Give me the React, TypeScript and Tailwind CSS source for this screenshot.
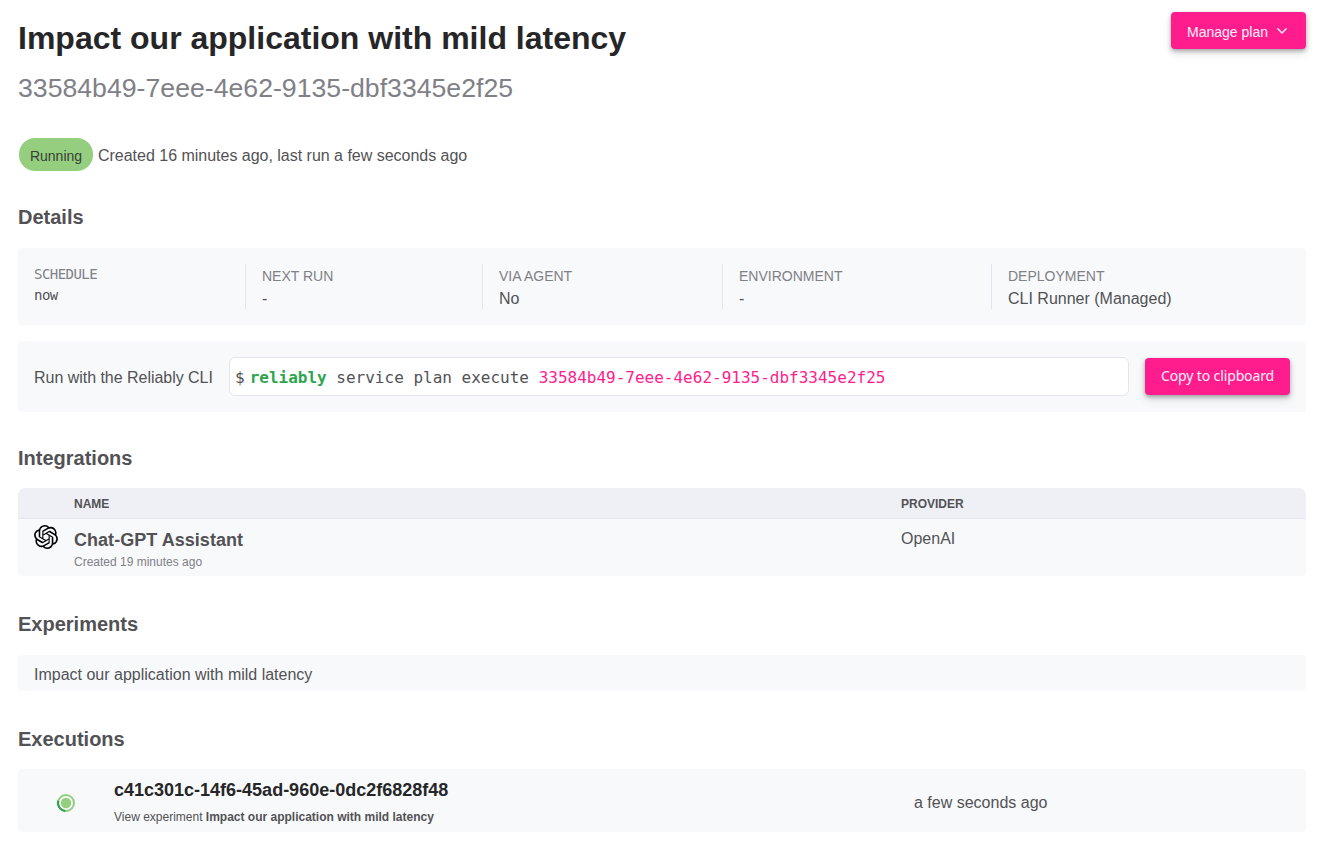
import React from "react";
import { SiOpenai } from "react-icons/si";

const cells = [
  { label: "NEXT RUN", value: "-", width: "w-[237px]" },
  { label: "VIA AGENT", value: "No", width: "w-[240px]" },
  { label: "ENVIRONMENT", value: "-", width: "w-[269px]" },
  { label: "DEPLOYMENT", value: "CLI Runner (Managed)", width: "flex-1" },
];

function Heading({ children }: { children: React.ReactNode }) {
  return <h2 className="text-[20px] leading-[30px] font-bold">{children}</h2>;
}

export default function App() {
  return (
    <main className="h-[844px] w-full overflow-hidden bg-white pl-[18px] pr-[11px] pt-3 font-['Liberation_Sans',Arial,sans-serif] text-base text-[#525255]">
      <header className="flex h-[92px] items-start justify-between">
        <div>
          <h1 className="text-[32px] leading-[52px] font-bold whitespace-nowrap text-[#262628]">Impact our application with mild latency</h1>
          <p className="text-[26.67px] leading-[48px] whitespace-nowrap text-[#808087]">33584b49-7eee-4e62-9135-dbf3345e2f25</p>
        </div>
        <button className="flex h-[37px] w-[135px] items-center rounded bg-[#ff1d8e] pl-4 pt-1 text-[14px] text-[#fff0f8] shadow-[0_2px_4px_rgba(0,0,0,0.3),0_5px_10px_rgba(0,0,0,0.1)]">
          <span className="w-[89px] text-left whitespace-nowrap">Manage plan</span>
          <svg className="-mt-[3px]" width="12" height="12" viewBox="0 0 12 12" fill="none" stroke="currentColor" strokeWidth="1.4" strokeLinecap="round" strokeLinejoin="round">
            <path d="M1.8 3.8 6 8l4.2-4.2" />
          </svg>
        </button>
      </header>

      <div className="mt-[34px] flex h-[33px] items-center">
        <span className="ml-px flex h-[33px] w-[74px] items-center justify-center rounded-[16px] bg-[#94ce7e] pt-[3px] text-[14px] text-[#36403a]">Running</span>
        <span className="ml-[5px] pt-[2px] tracking-[-0.015px] whitespace-nowrap">Created 16 minutes ago, last run a few seconds ago</span>
      </div>

      <section className="mt-[31px]">
        <Heading>Details</Heading>
        <div className="mt-4 flex h-[77px] rounded bg-[#f8f9fb] py-4">
          <div className="w-[227px] pl-4 font-['DejaVu_Sans_Mono',monospace] text-[14px] tracking-[-0.55px]">
            <div className="h-[21px] leading-[21px] text-[#808087]">SCHEDULE</div>
            <div className="h-[21px] leading-[21px]">now</div>
          </div>
          {cells.map((cell) => (
            <div key={cell.label} className={`${cell.width} border-l border-[#e5e5ed] pl-4`}>
              <div className="h-6 text-[14px] leading-6 text-[#808087]">{cell.label}</div>
              <div className="h-[22px] leading-[22px] whitespace-nowrap">{cell.value}</div>
            </div>
          ))}
        </div>
        <div className="mt-4 flex h-[71px] items-center rounded bg-[#f8f9fb] px-4">
          <span className="w-[195px] pt-[2px] tracking-[-0.03px] whitespace-nowrap">Run with the Reliably CLI</span>
          <div className="flex h-[39px] flex-1 items-center rounded-md border border-[#e5e5ed] bg-white pl-[5px] pt-[3px] font-['DejaVu_Sans_Mono',monospace] whitespace-pre">
            <span className="mr-[5px]">$</span>
            <span className="font-bold text-[#2da44e]">reliably</span>
            <span> service plan execute </span>
            <span className="text-[#ff1d8e]">33584b49-7eee-4e62-9135-dbf3345e2f25</span>
          </div>
          <button className="ml-4 h-[37px] w-[145px] rounded bg-[#ff1d8e] pb-[3px] font-['Noto_Sans',sans-serif] text-[14px] tracking-[-0.12px] whitespace-nowrap text-[#fff0f8] shadow-[0_2px_4px_rgba(0,0,0,0.3),0_5px_10px_rgba(0,0,0,0.1)]">Copy to clipboard</button>
        </div>
      </section>

      <section className="mt-[31px]">
        <Heading>Integrations</Heading>
        <div className="mt-[15px] h-[88px] overflow-hidden rounded-t-lg rounded-b bg-[#f8f9fb]">
          <div className="flex h-[31px] items-center border-b border-[#e5e5ed] bg-[#eff0f6] pl-14 pt-px text-[12px] font-bold">
            <span className="w-[827px]">NAME</span>
            <span>PROVIDER</span>
          </div>
          <div className="flex pl-4">
            <SiOpenai className="mt-[6px] h-6 w-6 text-black" />
            <div className="ml-4 w-[827px] pt-[9px]">
              <div className="text-[18px] leading-6 font-bold tracking-[0.04px]">Chat-GPT Assistant</div>
              <div className="text-[12px] leading-5 text-[#808087]">Created 19 minutes ago</div>
            </div>
            <div className="pt-2 leading-6">OpenAI</div>
          </div>
        </div>
      </section>

      <section className="mt-[33px]">
        <Heading>Experiments</Heading>
        <div className="mt-4 flex h-9 items-center rounded bg-[#f8f9fb] pl-4 pt-[3px]">Impact our application with mild latency</div>
      </section>

      <section className="mt-[33px]">
        <Heading>Executions</Heading>
        <div className="mt-[15px] flex h-[63px] items-center rounded bg-[#f8f9fb] pt-1">
          <svg className="ml-[38px]" width="20" height="20" viewBox="0 0 20 20" fill="none">
            <circle cx="10" cy="10" r="8" stroke="#94ce7e" strokeWidth="2" />
            <path d="M2.3 7.8A8 8 0 0 0 9.3 18" stroke="#2da44e" strokeWidth="2" />
            <circle cx="10" cy="10" r="5.2" fill="#94ce7e" />
          </svg>
          <div className="ml-[38px] w-[800px] whitespace-nowrap">
            <div className="text-[18px] leading-[28px] font-bold text-[#262628]">c41c301c-14f6-45ad-960e-0dc2f6828f48</div>
            <div className="text-[12px] leading-[26px]">View experiment <b>Impact our application with mild latency</b></div>
          </div>
          <span>a few seconds ago</span>
        </div>
      </section>
    </main>
  );
}
